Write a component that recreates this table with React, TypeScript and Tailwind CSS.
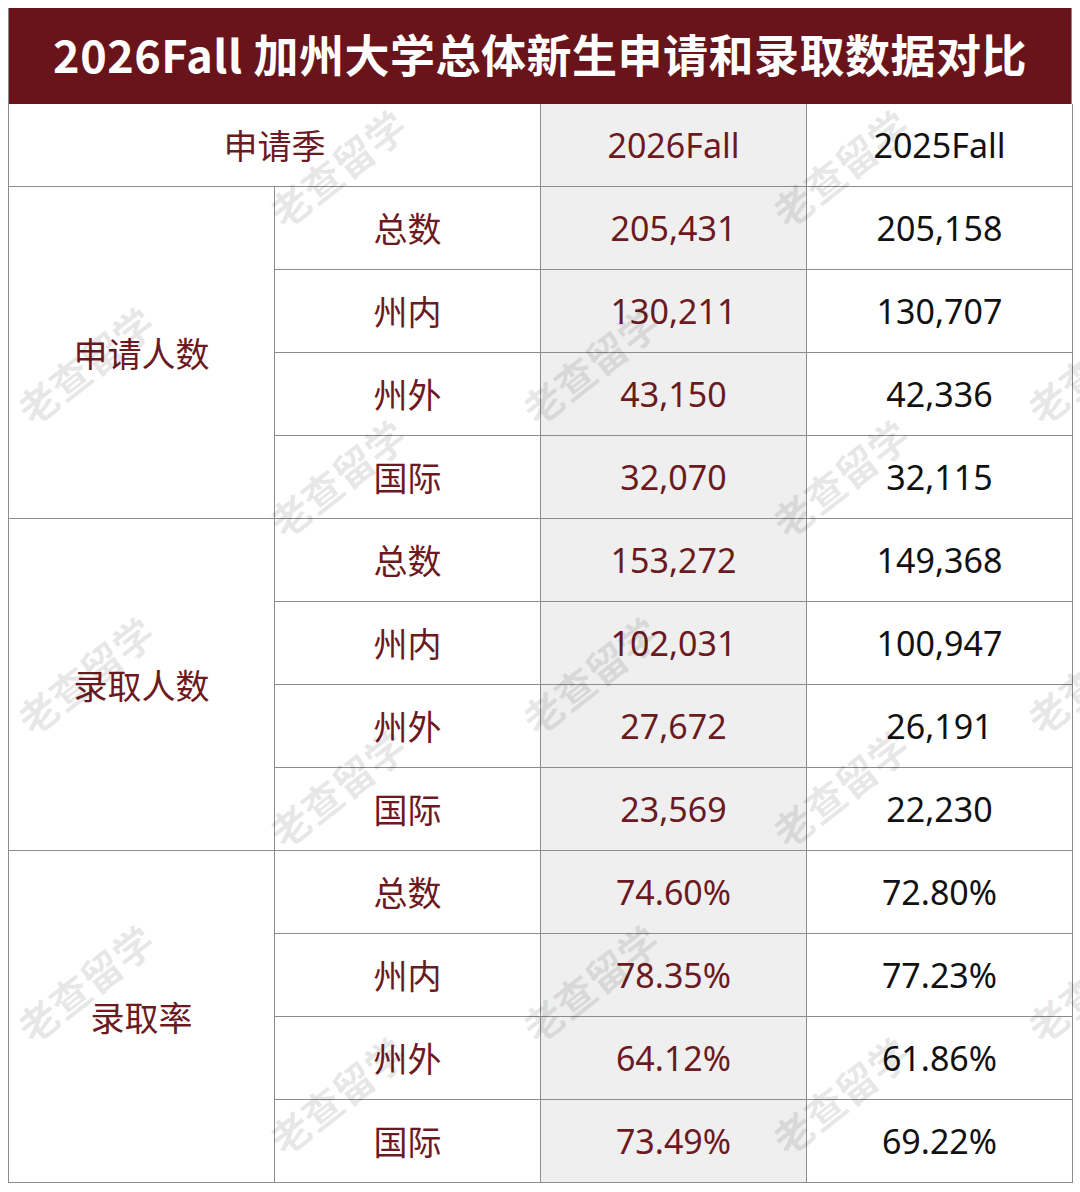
import React from "react";

const RED = "text-[#6b1a1f]";

type Group = { label: string; rows: { k: string; a: string; b: string }[] };

const groups: Group[] = [
  {
    label: "申请人数",
    rows: [
      { k: "总数", a: "205,431", b: "205,158" },
      { k: "州内", a: "130,211", b: "130,707" },
      { k: "州外", a: "43,150", b: "42,336" },
      { k: "国际", a: "32,070", b: "32,115" },
    ],
  },
  {
    label: "录取人数",
    rows: [
      { k: "总数", a: "153,272", b: "149,368" },
      { k: "州内", a: "102,031", b: "100,947" },
      { k: "州外", a: "27,672", b: "26,191" },
      { k: "国际", a: "23,569", b: "22,230" },
    ],
  },
  {
    label: "录取率",
    rows: [
      { k: "总数", a: "74.60%", b: "72.80%" },
      { k: "州内", a: "78.35%", b: "77.23%" },
      { k: "州外", a: "64.12%", b: "61.86%" },
      { k: "国际", a: "73.49%", b: "69.22%" },
    ],
  },
];

const marks: [number, number][] = [
  [337, 168],
  [840, 168],
  [85, 365],
  [590, 365],
  [1095, 365],
  [337, 478],
  [840, 478],
  [85, 675],
  [590, 675],
  [1095, 675],
  [337, 788],
  [840, 788],
  [85, 983],
  [590, 983],
  [1095, 983],
  [337, 1095],
  [840, 1095],
];

const cell =
  "flex items-center justify-center border-r border-b border-[#8c8c8c] text-[34px] leading-none";

export default function App() {
  return (
    <div
      className="relative w-[1080px] h-[1192px] bg-white overflow-hidden"
      style={{ fontFamily: '"Noto Sans", "Noto Sans CJK SC", sans-serif' }}
    >
      <div className="ml-2 mt-2 w-[1064px]">
        <div className="h-[96px] bg-[#69141a] flex items-center justify-center border-x border-[#8c8c8c]">
          <span
            className="text-white text-[45px] font-bold tracking-[0.5px] pb-1"
            style={{ fontFamily: '"Noto Sans CJK SC", sans-serif' }}
          >
            2026Fall 加州大学总体新生申请和录取数据对比
          </span>
        </div>
        <div className="grid grid-cols-[266px_266px_266px_266px] auto-rows-[83px] border-l border-[#8c8c8c]">
          <div className={`${cell} col-span-2 ${RED}`} style={{ fontFamily: '"Noto Sans CJK SC", sans-serif' }}>
            申请季
          </div>
          <div className={`${cell} bg-[#efefef] ${RED}`}>2026Fall</div>
          <div className={`${cell} text-[#111]`}>2025Fall</div>
          {groups.map((g) => (
            <React.Fragment key={g.label}>
              <div
                className={`${cell} row-span-4 ${RED}`}
                style={{ gridRow: "span 4 / span 4", fontFamily: '"Noto Sans CJK SC", sans-serif' }}
              >
                {g.label}
              </div>
              {g.rows.map((r, i) => (
                <React.Fragment key={i}>
                  <div className={`${cell} col-start-2 ${RED}`} style={{ fontFamily: '"Noto Sans CJK SC", sans-serif' }}>
                    {r.k}
                  </div>
                  <div className={`${cell} bg-[#efefef] ${RED}`}>{r.a}</div>
                  <div className={`${cell} text-[#111]`}>{r.b}</div>
                </React.Fragment>
              ))}
            </React.Fragment>
          ))}
        </div>
      </div>
      {marks.map(([x, y], i) => (
        <div
          key={i}
          className="pointer-events-none absolute -translate-x-1/2 -translate-y-1/2 -rotate-[38deg] whitespace-nowrap text-[40px] font-bold text-black/[0.09]"
          style={{ left: x, top: y, fontFamily: '"Noto Sans CJK SC", sans-serif' }}
        >
          老查留学
        </div>
      ))}
    </div>
  );
}
